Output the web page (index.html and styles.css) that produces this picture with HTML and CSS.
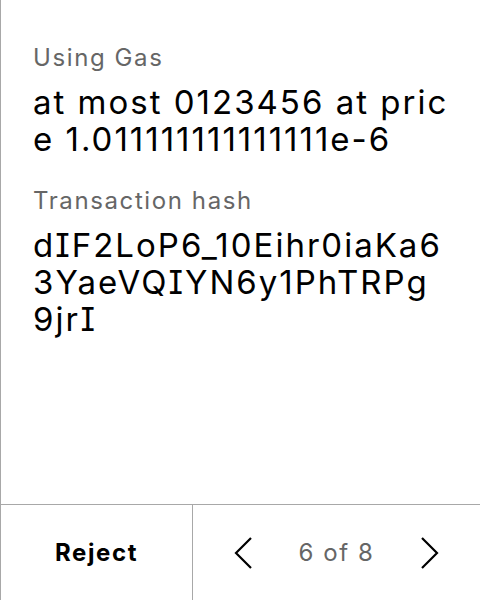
FILE: index.html
```html
<!DOCTYPE html>
<html>
<head>
<meta charset="utf-8">
<link rel="stylesheet" href="styles.css">
</head>
<body>
<div class="screen">
  <div class="content">
    <div class="field">
      <div class="label">Using Gas</div>
      <div class="value">at most 0123456 at price 1.011111111111111e-6</div>
    </div>
    <div class="field">
      <div class="label">Transaction hash</div>
      <div class="value">dIF2LoP6_10Eihr0iaKa63YaeVQIYN6y1PhTRPg9jrI</div>
    </div>
  </div>
  <div class="footer">
    <div class="reject">Reject</div>
    <div class="pager">
      <svg class="chev" width="32" height="32" viewBox="0 0 32 32"><path d="M24 1 L9 16 L24 31" fill="none" stroke="#000" stroke-width="2.2"/></svg>
      <span class="count">6 of 8</span>
      <svg class="chev" width="32" height="32" viewBox="0 0 32 32"><path d="M8 1 L23 16 L8 31" fill="none" stroke="#000" stroke-width="2.2"/></svg>
    </div>
  </div>
</div>
</body>
</html>
```
FILE: styles.css
```css
html, body {
  margin: 0;
  padding: 0;
  background: #fff;
}
body {
  font-family: Inter, "Noto Sans", sans-serif;
  font-feature-settings: "cv08" 1;
  color: #000;
}
.screen {
  width: 480px;
  height: 600px;
  box-sizing: border-box;
  border-left: 1px solid #a8a8a8;
  display: flex;
  flex-direction: column;
}
.content {
  flex: 1;
  padding: 41px 30px 0 32px;
  display: flex;
  flex-direction: column;
  gap: 26px;
}
.label {
  font-size: 24px;
  line-height: 34px;
  letter-spacing: 1.6px;
  color: #666;
}
.value {
  font-size: 33px;
  line-height: 37px;
  letter-spacing: 2px;
  word-break: break-all;
  margin-top: 9px;
}
.footer {
  height: 96px;
  border-top: 1px solid #a8a8a8;
  display: flex;
  box-sizing: border-box;
}
.reject {
  width: 191px;
  border-right: 1px solid #a8a8a8;
  display: flex;
  align-items: center;
  justify-content: center;
  font-size: 24px;
  font-weight: 700;
  letter-spacing: 1.6px;
}
.pager {
  flex: 1;
  display: flex;
  align-items: center;
  justify-content: space-between;
  padding: 0 34px;
}
.count {
  font-size: 24px;
  letter-spacing: 1.6px;
  color: #666;
}
.chev {
  display: block;
}
```
